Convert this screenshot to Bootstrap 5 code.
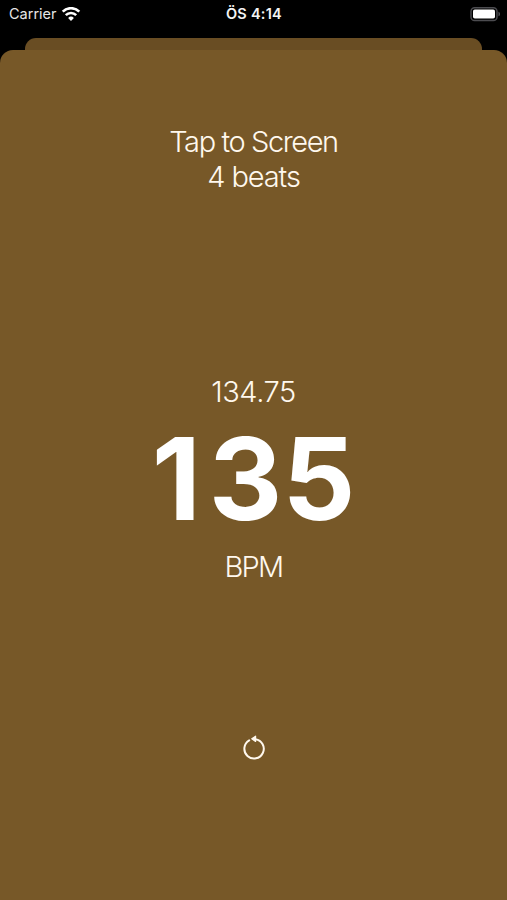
<!DOCTYPE html>
<html lang="en">
<head>
<meta charset="utf-8">
<meta name="viewport" content="width=device-width, initial-scale=1">
<title>Tap BPM</title>
<link href="https://cdn.jsdelivr.net/npm/bootstrap@5.3.0/dist/css/bootstrap.min.css" rel="stylesheet">
<style>
  body { background: #000; color: #fff; font-family: Inter, "Liberation Sans", sans-serif; }
  .screen { height: 900px; }
  .status { height: 38px; padding: 0 6px 10px 9px; font-size: 14px; line-height: 28px; color: #e6e6e6; }
  .status > div { flex: 1 1 0; white-space: nowrap; }
  .carrier { font-size: 14.5px; letter-spacing: 0; }
  .clock { font-size: 14.5px; font-weight: 600; letter-spacing: .25px; color: #f4f4f4; position: relative; left: -1px; }
  .sheet-behind { height: 12px; margin: 0 25px; border-radius: 11px 11px 0 0; background: #694d23; }
  .sheet-front { border: 0; border-radius: 13px 13px 0 0; background: #775828; color: #fff; padding-top: 74px; }
  .info { font-size: 29px; line-height: 35px; font-weight: 300; letter-spacing: -.45px; color: #fff8ee; white-space: nowrap; }
  .prompt { letter-spacing: -1.4px; }
  .beats { letter-spacing: -1.1px; }
  .average { margin-top: 180px; }
  .tempo { font-size: 114px; line-height: 114px; font-weight: 700; margin-top: 13px; white-space: nowrap; }
  .tempo span { letter-spacing: 8px; }
  .unit { margin-top: 13px; letter-spacing: -1.7px; }
  .reset { margin-top: 150px; color: #fff8ee; line-height: 0; }
</style>
<script src="https://cdn.jsdelivr.net/npm/bootstrap@5.3.0/dist/js/bootstrap.bundle.min.js"></script>
</head>
<body>
<div class="screen d-flex flex-column overflow-hidden">
  <header class="status d-flex">
    <div class="d-flex align-items-center">
      <span class="carrier">Carrier</span>
      <svg class="ms-1" width="20" height="15" viewBox="0 0 20 15" fill="none" stroke="#fff" stroke-width="2.6">
        <path d="M1.7 4.6a11.8 11.8 0 0 1 16.6 0"/>
        <path d="M4.8 8.1a7.4 7.4 0 0 1 10.4 0"/>
        <path d="M10 14 7.1 11a4.1 4.1 0 0 1 5.8 0z" fill="#fff" stroke="none"/>
      </svg>
    </div>
    <div class="clock text-center">ÖS 4:14</div>
    <div class="d-flex align-items-center justify-content-end">
      <svg width="31" height="15" viewBox="0 0 31 15">
        <rect x="1" y=".7" width="26" height="12.8" rx="3.6" fill="none" stroke="#4c4c50" stroke-width="1.4"/>
        <rect x="3" y="2.5" width="22" height="9" rx="1.8" fill="#fff"/>
        <path d="M28.5 4.7c1.9.7 1.9 3.9 0 4.6z" fill="#5a5a5e"/>
      </svg>
    </div>
  </header>
  <div class="sheet-behind flex-shrink-0"></div>
  <main class="sheet-front flex-grow-1 d-flex flex-column align-items-center text-center">
    <div class="info prompt">Tap to Screen</div>
    <div class="info beats">4 beats</div>
    <div class="info average">134.75</div>
    <div class="tempo"><span>1</span>35</div>
    <div class="info unit">BPM</div>
    <button type="button" class="btn reset border-0 p-0" aria-label="Reset">
      <svg width="26" height="28" viewBox="0 0 26 28">
        <path d="M8.2 6.4A9.7 9.7 0 1 0 14.5 5.2" fill="none" stroke="currentColor" stroke-width="2" stroke-linecap="round"/>
        <path d="M10.8 4.7 14.6 2.2V7.4z" fill="currentColor" stroke="currentColor" stroke-width="1.2" stroke-linejoin="round"/>
      </svg>
    </button>
  </main>
</div>
</body>
</html>
